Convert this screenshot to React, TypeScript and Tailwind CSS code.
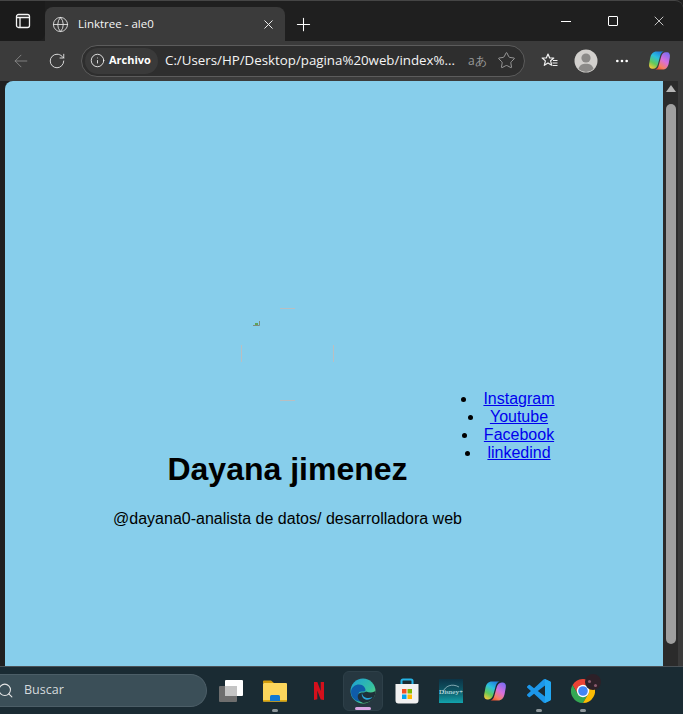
import type { ReactNode } from 'react'
import { ArrowLeft, Ellipsis, Globe, Info, Plus, RotateCw, Search, Star, X } from 'lucide-react'

function SidebarIcon() {
  return (
    <svg width="16" height="16" viewBox="0 0 16 16" fill="none" stroke="#f4f4f4" strokeWidth="1.3">
      <rect x="1.5" y="1.5" width="13" height="13" rx="2" />
      <path d="M1.500 4.500h13M5 4.500v10" />
    </svg>
  )
}

function FavoritesIcon() {
  return (
    <svg width="18" height="18" viewBox="0 0 18 18" fill="none" stroke="#f0f0f0" strokeWidth="1.2">
      <path d="M7 2l1.700 4h4.100l-3.200 2.800 1.100 4.400L7 10.900l-3.700 2.400 1.100-4.400L1.200 6h4.100z" strokeLinejoin="round" />
      <path d="M12 8.500h4.500M11.500 11h5M11.500 13.500h5" />
    </svg>
  )
}

function Avatar() {
  return (
    <svg width="24" height="24" viewBox="0 0 24 24">
      <circle cx="12" cy="12" r="11.5" fill="#d2d0cd" />
      <circle cx="12" cy="9" r="4.6" fill="#8b8a88" />
      <path d="M4.500 20c1-4 4-5.200 7.500-5.200s6.500 1.200 7.500 5.200a11 11 0 0 1-15 0z" fill="#8b8a88" />
    </svg>
  )
}

function CopilotIcon({ id, size }: { id: string; size: number }) {
  return (
    <svg width={size} height={size} viewBox="0 0 24 24">
      <defs>
        <linearGradient id={`${id}a`} x1="0.7" y1="0" x2="0.2" y2="1">
          <stop offset="0" stopColor="#1f7fe0" />
          <stop offset="0.35" stopColor="#2cc0dc" />
          <stop offset="0.7" stopColor="#62c95a" />
          <stop offset="1" stopColor="#f3c83a" />
        </linearGradient>
        <linearGradient id={`${id}b`} x1="0.8" y1="0" x2="0.2" y2="1">
          <stop offset="0" stopColor="#7d6df2" />
          <stop offset="0.45" stopColor="#d86fdc" />
          <stop offset="0.8" stopColor="#f6805f" />
          <stop offset="1" stopColor="#f0502f" />
        </linearGradient>
      </defs>
      <path d="M9 2.500h7.500c-2 .6-3 2-3.700 4.300l-2.500 9c-.7 2.500-2.300 4.700-5 4.700H4c-2.200 0-3.300-2.200-2.800-5l1.100-6C3 5 5.500 2.500 9 2.500z" fill={`url(#${id}a)`} />
      <path d="M15 21.500H7.500c2-.6 3-2 3.700-4.300l2.500-9c.7-2.500 2.300-4.700 5-4.700H20c2.200 0 3.300 2.200 2.800 5l-1.100 6c-.7 4.500-3.200 7-6.700 7z" fill={`url(#${id}b)`} />
    </svg>
  )
}

function FolderIcon() {
  return (
    <svg width="26" height="24" viewBox="0 0 26 24">
      <path d="M1 2.500a1 1 0 0 1 1-1h7l3 2.500H1z" fill="#d19b0b" />
      <rect x="1" y="4" width="24" height="18.500" rx="1" fill="#fcd65c" />
      <rect x="1" y="21" width="24" height="1.500" fill="#e0a90f" />
      <path d="M8 17.500a1.500 1.500 0 0 1 1.500-1.500h7a1.500 1.500 0 0 1 1.500 1.500V22H8z" fill="#0f78d4" />
    </svg>
  )
}

function NetflixIcon() {
  return (
    <svg width="12" height="20" viewBox="0 0 12 20">
      <path d="M1 1h3.300l3.400 9V1H11v18l-3.300-.6L4.300 9.500v8.800L1 19z" fill="#d5101c" />
    </svg>
  )
}

function EdgeIcon() {
  return (
    <svg width="26" height="26" viewBox="0 0 26 26">
      <defs>
        <linearGradient id="edgeTop" x1="0" y1="0" x2="1" y2="1">
          <stop offset="0" stopColor="#1c9ed8" />
          <stop offset="0.6" stopColor="#35c1a0" />
          <stop offset="1" stopColor="#7fe36a" />
        </linearGradient>
      </defs>
      <circle cx="13" cy="13" r="12.5" fill="url(#edgeTop)" />
      <path d="M1 14c0-5 4.500-7.500 8-7.500 4.500 0 6.500 3.500 6.500 5.500 0 1-1 1.500-2 1.500-3 0-4.500 0-5 2.500-.5 3 2 6 5.500 7.500C7 25 1 20.500 1 14z" fill="#0f5ca8" />
      <path d="M16 13.500c5 2 9 .5 9.500-1 .3 3-1 7-3.500 9.500-2.500 2-6 3-9 3-4-1.500-6-5-5-8 .5-2 3-2.500 5-2.500 1 0 2.200-.2 3-1z" fill="#1f3039" />
      <path d="M12 15c-.8 2.500.7 5.500 3.500 6.500 2.500.8 5.500-.3 7-2.500-2.500 1.500-6.500 1.500-8.500-.3-1.200-1-1.800-2.400-2-3.700z" fill="#2aa5dc" />
    </svg>
  )
}

function StoreIcon() {
  return (
    <svg width="24" height="26" viewBox="0 0 24 26">
      <path d="M6.500 7V3A1.500 1.500 0 0 1 8 1.500h8A1.500 1.500 0 0 1 17.500 3v4" fill="none" stroke="#25b4e6" strokeWidth="2" />
      <path d="M.5 6h23v16.500a3 3 0 0 1-3 3h-17a3 3 0 0 1-3-3z" fill="#f1f1f1" />
      <rect x="7" y="11" width="4.500" height="4.500" fill="#f25022" />
      <rect x="12.500" y="11" width="4.500" height="4.500" fill="#7fba00" />
      <rect x="7" y="16.500" width="4.500" height="4.500" fill="#00a4ef" />
      <rect x="12.500" y="16.500" width="4.500" height="4.500" fill="#ffb900" />
    </svg>
  )
}

function DisneyIcon() {
  return (
    <div className="relative flex h-6 w-6 items-center justify-center overflow-hidden bg-gradient-to-b from-[#0c3346] via-[#0d5866] to-[#12a4ad]">
      <svg className="absolute top-[4px] left-[3px]" width="18" height="10" viewBox="0 0 18 10" fill="none" stroke="#cfe9ee" strokeWidth="0.6">
        <path d="M1 9C3 3 10 0 17 4" />
      </svg>
      <span className="mt-[4px] font-['Liberation_Serif',serif] text-[7px] leading-none text-[#d8eef2]">Disney+</span>
    </div>
  )
}

function VsCodeIcon() {
  return (
    <svg width="24" height="24" viewBox="0 0 24 24">
      <path
        d="M23.150 2.587L18.210.21a1.494 1.494 0 0 0-1.705.29l-9.460 8.630-4.120-3.128a.999.999 0 0 0-1.276.057L.327 7.261A1 1 0 0 0 .326 8.740L3.899 12 .326 15.260a1 1 0 0 0 .001 1.479L1.650 17.940a.999.999 0 0 0 1.276.057l4.120-3.128 9.460 8.630a1.492 1.492 0 0 0 1.704.29l4.942-2.377A1.500 1.500 0 0 0 24 20.060V3.939a1.500 1.500 0 0 0-.85-1.352zm-5.146 14.861L10.826 12l7.178-5.448v10.896z"
        fill="#1c97ea"
      />
      <path d="M18 .1l5.150 2.487A1.500 1.500 0 0 1 24 3.939V20.060a1.500 1.500 0 0 1-.85 1.353L18 23.900z" fill="#22a7f2" />
    </svg>
  )
}

function ChromeIcon() {
  return (
    <div className="relative h-6 w-6">
      <svg width="24" height="24" viewBox="0 0 24 24">
        <path d="M22.400 6A12 12 0 0 0 1.600 6l5.200 9A6 6 0 0 1 12 6z" fill="#ea4335" />
        <path d="M1.600 6A12 12 0 0 0 12 24l5.200-9a6 6 0 0 1-10.400 0z" fill="#34a853" />
        <path d="M12 24A12 12 0 0 0 22.400 6H12a6 6 0 0 1 5.200 9z" fill="#fbbc04" />
        <circle cx="12" cy="12" r="6.200" fill="#fff" />
        <circle cx="12" cy="12" r="4.800" fill="#4285f4" />
      </svg>
      <div className="absolute -top-[5px] -right-[6px] h-4 w-4 overflow-hidden rounded-full bg-[#2d2028]">
        <div className="mt-[6px] ml-[3px] h-[3px] w-[3px] rounded-full bg-[#8a5a6e]" />
        <div className="mt-[1px] ml-[9px] h-[3px] w-[3px] rounded-full bg-[#8a5a6e]" />
      </div>
    </div>
  )
}

function TaskIcon({ children, active, open }: { children: ReactNode; active?: boolean; open?: boolean }) {
  return (
    <div className="relative flex h-10 w-[44px] items-center justify-center">
      {active && <div className="absolute inset-x-[2px] inset-y-0 rounded-md border border-[#2e4049] bg-[#263740]" />}
      <div className="relative">{children}</div>
      {open && <div className="absolute bottom-[-1px] left-1/2 h-[3px] w-[6px] -translate-x-1/2 rounded-full bg-[#8d979c]" />}
      {active && <div className="absolute bottom-[1px] left-1/2 h-[3px] w-4 -translate-x-1/2 rounded-full bg-[#d9a5e3]" />}
    </div>
  )
}

function BrokenImage() {
  return (
    <svg className="mb-[48px] block" width="101" height="96" viewBox="0 0 101 96">
      <path d="M43 1.500h15M43 93.500h15M4.500 38v17M96.500 38v17" stroke="#b9bfc2" strokeWidth="1" />
      <path d="M16 18.500h6.500V14" fill="none" stroke="#7d8b80" strokeWidth="1" />
      <rect x="18" y="16" width="3" height="2" fill="#5da35a" />
    </svg>
  )
}

function App() {
  const links = ['Instagram', 'Youtube', 'Facebook', 'linkedind']

  return (
    <div className="flex h-[714px] w-[683px] flex-col overflow-hidden bg-[#202020] font-['Open_Sans',sans-serif]">
      {/* Tab strip */}
      <div className="flex h-[41px] shrink-0 items-end rounded-tr-lg border-t border-[#454545] bg-[#1f1f1f] text-white">
        <div className="flex h-[40px] w-[45px] items-center justify-center rounded-br-lg bg-[#1b1b1b]">
          <SidebarIcon />
        </div>
        <div className="flex h-[34px] w-[240px] items-center rounded-t-lg bg-[#3b3b3b] pr-[9px] pl-[7px]">
          <Globe size={17} strokeWidth={1.2} className="text-[#e8e8e8]" />
          <span className="ml-[9px] flex-1 text-[11.5px] text-[#f6f6f6]">Linktree - ale0</span>
          <X size={15} strokeWidth={1.6} className="text-[#ececec]" />
        </div>
        <div className="flex h-[34px] w-[36px] items-center justify-center">
          <Plus size={21} strokeWidth={1.2} />
        </div>
        <div className="ml-auto flex h-[40px] items-center">
          <div className="flex w-[47px] justify-center">
            <div className="h-px w-[10px] bg-white" />
          </div>
          <div className="flex w-[47px] justify-center">
            <div className="h-[10px] w-[10px] rounded-[1px] border border-white" />
          </div>
          <div className="flex w-[47px] justify-center pr-[1px]">
            <X size={16} strokeWidth={1.1} />
          </div>
        </div>
      </div>

      {/* Toolbar */}
      <div className="flex h-[40px] shrink-0 items-center bg-[#3b3b3b] pb-[1px] text-white">
        <div className="flex w-[40px] justify-center pl-[2px]">
          <ArrowLeft size={20} strokeWidth={1} className="text-[#8f8f8f]" />
        </div>
        <div className="flex w-[34px] justify-center">
          <RotateCw size={18} strokeWidth={1.2} className="text-[#e8e8e8]" />
        </div>
        <div className="ml-[7px] flex h-[32px] w-[444px] items-center rounded-full border border-[#5c5c5c] bg-[#2e2e2e] pr-[8px] pl-[3px]">
          <div className="flex h-[26px] w-[73px] items-center rounded-full bg-[#3a3a3a] pl-[5px]">
            <Info size={15} strokeWidth={1.3} />
            <span className="ml-[4px] text-[11px] font-bold">Archivo</span>
          </div>
          <span className="ml-[7px] w-[294px] text-[13.3px] whitespace-nowrap text-[#f4f4f4]">C:/Users/HP/Desktop/pagina%20web/index%...</span>
          <span className="ml-[9px] text-[12px] text-[#9a9a9a]">aあ</span>
          <Star size={19} strokeWidth={1.1} className="ml-auto text-[#a6a6a6]" />
        </div>
        <div className="ml-[10px] flex w-[30px] justify-center">
          <FavoritesIcon />
        </div>
        <div className="ml-[6px] flex w-[30px] justify-center">
          <Avatar />
        </div>
        <div className="ml-[6px] flex w-[30px] justify-center">
          <Ellipsis size={16} />
        </div>
        <div className="ml-[7px] flex w-[30px] justify-center">
          <CopilotIcon id="cpa" size={23} />
        </div>
      </div>

      {/* Page area */}
      <div className="flex min-h-0 flex-1 pl-[5px]">
        <main className="flex flex-1 items-start rounded-tl-lg bg-[#87ceeb] pt-[226px] pl-[108px] font-['Liberation_Sans',Arial,sans-serif] text-black">
          <div className="flex w-[349px] flex-col items-center">
            <BrokenImage />
            <h1 className="text-[32px] leading-[37px] font-bold">Dayana jimenez</h1>
            <p className="mt-[22px] text-[16px] leading-[18px] whitespace-nowrap">@dayana0-analista de datos/ desarrolladora web</p>
          </div>
          <ul className="mt-[83px] ml-[-4px] w-[100px] list-inside list-disc text-center text-[16px] leading-[18px]">
            {links.map((link) => (
              <li key={link}>
                <a href="#" className="text-[#0000ee] underline">{link}</a>
              </li>
            ))}
          </ul>
        </main>
        {/* Scrollbar */}
        <div className="flex w-[20px] flex-col items-center border-r-[5px] border-[#3a3a3a] bg-[#2b2b2b] pt-[4px]">
          <div className="h-0 w-0 border-x-[5px] border-b-[7px] border-x-transparent border-b-[#b5b5b5]" />
          <div className="mt-[12px] h-[540px] w-[10px] rounded-full bg-[#9f9f9f]" />
        </div>
      </div>

      {/* Taskbar */}
      <div className="flex h-[48px] shrink-0 items-center border-t border-[#4a5257] bg-[#1a2b33] text-white">
        <div className="flex h-[33px] w-[207px] items-center rounded-r-full border border-l-0 border-[#4c5e67] bg-[#3b4f58]">
          <Search size={17} strokeWidth={1.5} className="-ml-[3px] text-[#e6e6e6]" />
          <span className="ml-[10px] text-[12.5px] text-[#d5dadc]">Buscar</span>
        </div>
        <div className="ml-[2px] flex items-center">
          <TaskIcon>
            <div className="relative h-[22px] w-[24px]">
              <div className="absolute bottom-0 left-0 h-4 w-[18px] rounded-[1px] bg-[#6e6e6e]" />
              <div className="absolute top-0 right-0 h-4 w-[18px] rounded-[1px] bg-white" />
              <div className="absolute top-[6px] left-[6px] h-[10px] w-[12px] bg-[#c4c4c4]" />
            </div>
          </TaskIcon>
          <TaskIcon open><FolderIcon /></TaskIcon>
          <TaskIcon><NetflixIcon /></TaskIcon>
          <TaskIcon active><EdgeIcon /></TaskIcon>
          <TaskIcon><StoreIcon /></TaskIcon>
          <TaskIcon><DisneyIcon /></TaskIcon>
          <TaskIcon><CopilotIcon id="cpb" size={24} /></TaskIcon>
          <TaskIcon open><VsCodeIcon /></TaskIcon>
          <TaskIcon open><ChromeIcon /></TaskIcon>
        </div>
      </div>
    </div>
  )
}

export default App
